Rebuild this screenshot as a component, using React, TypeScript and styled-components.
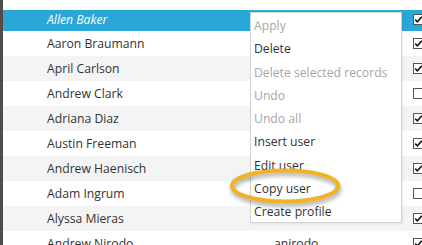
import React from 'react';
import styled, { createGlobalStyle } from 'styled-components';

const GlobalStyle = createGlobalStyle`
  html, body {
    margin: 0;
    padding: 0;
    background: #ffffff;
    overflow: hidden;
  }
  body {
    font-family: "Open Sans", "Noto Sans", sans-serif;
  }
`;

interface IUser {
  name: string;
  login: string;
  active: boolean;
}

const users: IUser[] = [
  { name: 'Allen Baker', login: 'abaker', active: true },
  { name: 'Aaron Braumann', login: 'abraumann', active: true },
  { name: 'April Carlson', login: 'acarlson', active: true },
  { name: 'Andrew Clark', login: 'aclark', active: false },
  { name: 'Adriana Diaz', login: 'adiaz', active: true },
  { name: 'Austin Freeman', login: 'afreeman', active: true },
  { name: 'Andrew Haenisch', login: 'ahaenisch', active: true },
  { name: 'Adam Ingrum', login: 'aingrum', active: false },
  { name: 'Alyssa Mieras', login: 'amieras', active: true },
  { name: 'Andrew Nirodo', login: 'anirodo', active: true },
];

const menuItems = [
  { label: 'Apply', disabled: true },
  { label: 'Delete', disabled: false },
  { label: 'Delete selected records', disabled: true },
  { label: 'Undo', disabled: true },
  { label: 'Undo all', disabled: true },
  { label: 'Insert user', disabled: false },
  { label: 'Edit user', disabled: false },
  { label: 'Copy user', disabled: false },
  { label: 'Create profile', disabled: false },
];

export default function App() {
  return (
    <>
      <GlobalStyle />
      <Page>
        <Grid>
          {users.map((user, i) => (
            <Row key={user.name} $selected={i === 0} $alt={i % 2 === 0}>
              <NameCell $selected={i === 0}>{user.name}</NameCell>
              <LoginCell>{user.login}</LoginCell>
              <CheckCell>
                <CheckBox>
                  {user.active && (
                    <svg width="9" height="9" viewBox="0 0 9 9">
                      <path d="M1.2 4.6 L3.4 6.8 L7.8 1.8" fill="none" stroke="#111" strokeWidth="1.5" />
                    </svg>
                  )}
                </CheckBox>
              </CheckCell>
            </Row>
          ))}
        </Grid>

        <ContextMenu>
          {menuItems.map((item) => (
            <MenuItem key={item.label} $disabled={item.disabled}>
              {item.label}
            </MenuItem>
          ))}
        </ContextMenu>

        <Highlight width="124" height="48" viewBox="0 0 124 48">
          <ellipse cx="60" cy="23" rx="53" ry="15.5" fill="none" stroke="#efb326" strokeWidth="4" />
        </Highlight>
      </Page>
    </>
  );
}

const Page = styled.div`
  position: relative;
  width: 422px;
  height: 245px;
  padding-top: 10px;
  padding-left: 3px;
  box-sizing: border-box;
  background: #ffffff;
  overflow: hidden;

  &::before {
    content: '';
    position: absolute;
    left: 0;
    top: 0;
    bottom: 0;
    width: 3px;
    background: #4d4d4d;
  }
`;

const Grid = styled.div`
  display: flex;
  flex-direction: column;
`;

const Row = styled.div<{ $selected: boolean; $alt: boolean }>`
  display: grid;
  grid-template-columns: 267px 137px 1fr;
  align-items: center;
  height: ${(p) => (p.$selected ? '21px' : '25px')};
  padding-bottom: ${(p) => (p.$selected ? '3px' : '0')};
  box-sizing: border-box;
  background: ${(p) => (p.$selected ? '#29a8d8' : p.$alt ? '#f4f4f4' : '#ffffff')};
  font-size: 12.2px;
  color: #333333;
`;

const NameCell = styled.div<{ $selected: boolean }>`
  padding-left: 44px;
  white-space: nowrap;
  font-style: ${(p) => (p.$selected ? 'italic' : 'normal')};
  color: ${(p) => (p.$selected ? '#ffffff' : '#333333')};
`;

const LoginCell = styled.div`
  padding-left: 4px;
  white-space: nowrap;
`;

const CheckCell = styled.div`
  display: flex;
  align-items: center;
  padding-left: 6px;
`;

const CheckBox = styled.div`
  width: 11px;
  height: 11px;
  box-sizing: border-box;
  border: 1px solid #555555;
  background: #ffffff;
  display: flex;
  align-items: center;
  justify-content: center;
  flex-shrink: 0;
`;

const ContextMenu = styled.div`
  position: absolute;
  left: 250px;
  top: 12px;
  width: 152px;
  height: 211px;
  box-sizing: border-box;
  padding: 1px 0;
  background: #ffffff;
  border: 1px solid #d4d4d4;
  box-shadow: 1px 1px 2px rgba(0, 0, 0, 0.08);
  display: flex;
  flex-direction: column;
`;

const MenuItem = styled.div<{ $disabled: boolean }>`
  height: 23.25px;
  flex-shrink: 0;
  display: flex;
  align-items: center;
  padding-left: 3px;
  font-size: 12.2px;
  white-space: nowrap;
  color: ${(p) => (p.$disabled ? '#a6a6a6' : '#333333')};
`;

const Highlight = styled.svg`
  position: absolute;
  left: 225px;
  top: 163px;
  filter: drop-shadow(1px 3px 2px rgba(0, 0, 0, 0.35));
`;
